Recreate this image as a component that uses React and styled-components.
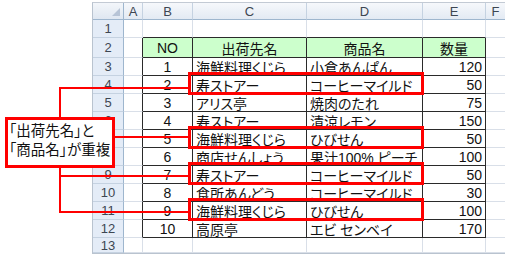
import React from 'react'
import styled, { createGlobalStyle } from 'styled-components'

const GlobalStyle = createGlobalStyle`
  html, body {
    margin: 0;
    padding: 0;
    background: #fff;
  }
  * {
    box-sizing: border-box;
  }
`

const COLS = ['A', 'B', 'C', 'D', 'E', 'F']
const COL_WIDTHS = '31px 19px 50px 114px 116px 63px 20px'
const ALIGN = { B: 'center', C: 'flex-start', D: 'flex-start', E: 'flex-end' }

const records = [
  [1, '海鮮料理くじら', '小倉あんぱん', 120],
  [2, '寿ストアー', 'コーヒーマイルド', 50],
  [3, 'アリス亭', '焼肉のたれ', 75],
  [4, '寿ストアー', '清涼レモン', 150],
  [5, '海鮮料理くじら', 'ひびせん', 50],
  [6, '商店せんしょう', '果汁100% ピーチ', 100],
  [7, '寿ストアー', 'コーヒーマイルド', 50],
  [8, '食所あんどう', 'コーヒーマイルド', 30],
  [9, '海鮮料理くじら', 'ひびせん', 100],
  [10, '高原亭', 'エビ センベイ', 170],
]

const rows = [
  ['', '', '', '', '', ''],
  ['', 'NO', '出荷先名', '商品名', '数量', ''],
  ...records.map(([no, shop, item, qty]) => ['', no, shop, item, qty, '']),
  ['', '', '', '', '', ''],
]

// highlighted rows (duplicated 出荷先名 + 商品名)
const marked = [4, 7, 9, 11]
const rowTop = (r) => 57 + (r - 3) * 18

const Canvas = styled.div`
  position: relative;
  width: 505px;
  height: 255px;
  overflow: hidden;
  display: flex;
  padding: 2px 0 0 92px;
`

const Sheet = styled.div`
  display: grid;
  grid-template-columns: ${COL_WIDTHS};
  grid-template-rows: 17px 18px 20px repeat(10, 18px) 15px;
  border-top: 1px solid #c3cad4;
  border-left: 1px solid #b9c3cf;
  border-bottom: 1px solid #b9c3cf;
  align-self: flex-start;
  font-family: "Liberation Sans", "Noto Sans CJK JP", sans-serif;
  font-feature-settings: "palt";
`

const Corner = styled.div`
  position: relative;
  background: linear-gradient(#f3f6fa, #dfe7f1);
  border-right: 1px solid #9eb6ce;
  border-bottom: 1px solid #9eb6ce;
  &::after {
    content: '';
    position: absolute;
    right: 3px;
    bottom: 3px;
    border-style: solid;
    border-width: 0 0 8px 8px;
    border-color: transparent transparent #b7c4d6 transparent;
  }
`

const ColHead = styled.div`
  display: flex;
  align-items: center;
  justify-content: center;
  background: linear-gradient(#f6f8fb, #e3eaf3);
  border-right: 1px solid #c5d2e1;
  border-bottom: 1px solid #9eb6ce;
  color: #3d4652;
  font-size: 13px;
`

const RowHead = styled.div`
  display: flex;
  align-items: center;
  justify-content: center;
  background: #e4ecf7;
  border-right: 1px solid #9eb6ce;
  border-bottom: 1px solid #c5d2e1;
  color: #3d4652;
  font-size: 13px;
`

const Cell = styled.div`
  display: flex;
  align-items: center;
  justify-content: ${(p) => p.$align || 'flex-start'};
  padding: 0 3px;
  white-space: nowrap;
  overflow: hidden;
  font-size: 14px;
  color: #111;
  background: ${(p) => p.$bg || '#fff'};
  border-right: 1px solid ${(p) => (p.$r ? '#2a2a2a' : '#d9dfe8')};
  border-bottom: 1px solid ${(p) => (p.$b ? '#2a2a2a' : '#d9dfe8')};
`

const Overlay = styled.svg`
  position: absolute;
  left: 0;
  top: 0;
  pointer-events: none;
`

const Callout = styled.div`
  position: absolute;
  left: 5px;
  top: 117px;
  width: 110px;
  height: 51px;
  border: 3px solid #f00;
  background: #fff;
  padding: 0 0 0 1px;
  font-family: "Noto Sans CJK JP", sans-serif;
  font-feature-settings: "palt";
  font-size: 14.5px;
  line-height: 19px;
  color: #111;
  white-space: nowrap;
`

const SheetGrid = () => (
  <Sheet>
    <Corner />
    {COLS.map((c) => <ColHead key={c}>{c}</ColHead>)}
    {rows.map((cells, i) => {
      const r = i + 1
      const inRange = r >= 2 && r <= 12
      return (
        <React.Fragment key={r}>
          <RowHead>{r}</RowHead>
          {cells.map((v, j) => {
            const col = COLS[j]
            const inTable = inRange && j >= 1 && j <= 4
            return (
              <Cell
                key={col}
                $align={r === 2 && inTable ? 'center' : ALIGN[col]}
                $bg={r === 2 && inTable ? '#ccffcc' : null}
                $r={inTable || (inRange && col === 'A')}
                $b={inTable || (r === 1 && j >= 1 && j <= 4)}
              >
                {v}
              </Cell>
            )
          })}
        </React.Fragment>
      )
    })}
  </Sheet>
)

const Annotations = () => (
  <Overlay width="505" height="255" viewBox="0 0 505 255">
    <g stroke="#f00" fill="none">
      <line x1="60" y1="87" x2="60" y2="213" strokeWidth="2" />
      <line x1="59" y1="88" x2="188" y2="88" strokeWidth="2" />
      <line x1="115" y1="137" x2="188" y2="137" strokeWidth="2" />
      <line x1="59" y1="176" x2="188" y2="176" strokeWidth="2" />
      <line x1="59" y1="212" x2="188" y2="212" strokeWidth="2" />
      {marked.map((r) => (
        <rect key={r} x="189.5" y={rowTop(r) - 1.5} width="233" height="20" strokeWidth="3" />
      ))}
    </g>
  </Overlay>
)

export default function App() {
  return (
    <>
      <GlobalStyle />
      <Canvas>
        <SheetGrid />
        <Annotations />
        <Callout>
          「出荷先名」と
          <br />
          「商品名」が重複
        </Callout>
      </Canvas>
    </>
  )
}
